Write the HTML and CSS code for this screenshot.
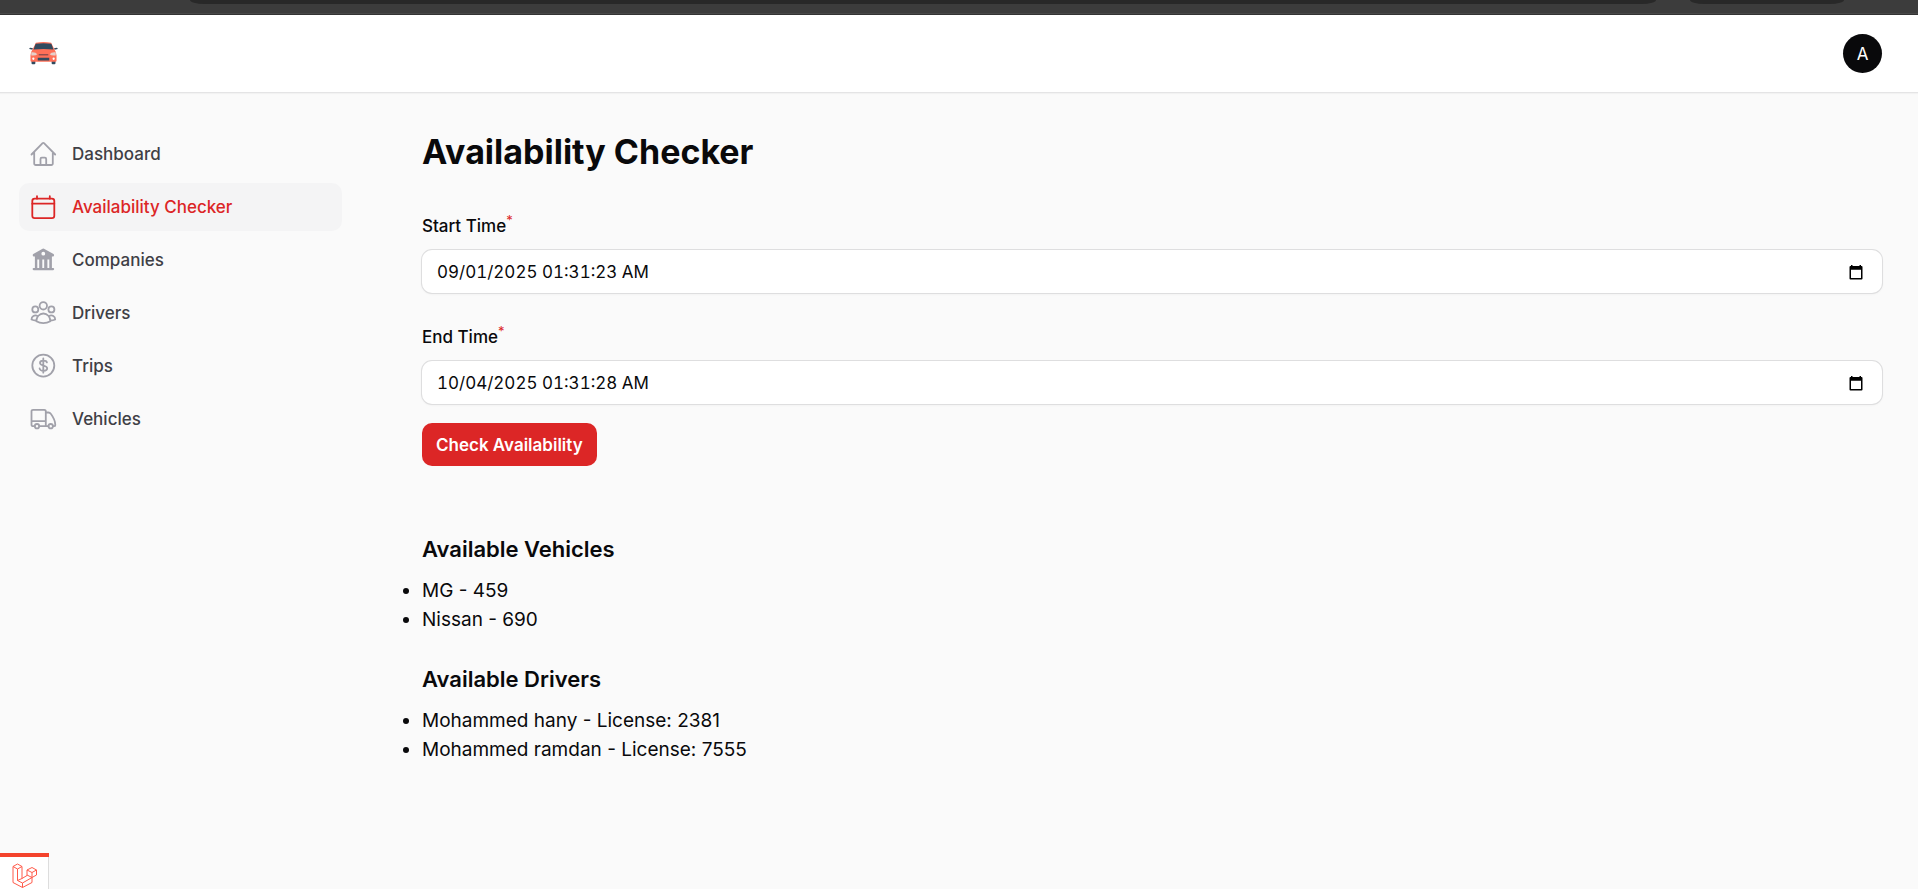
FILE: index.html
```html
<!DOCTYPE html>
<html lang="en-US">
<head>
<meta charset="utf-8">
<title>Availability Checker</title>
<link rel="stylesheet" href="styles.css">
</head>
<body>
<div class="chrome" aria-hidden="true"><span class="chrome-address"></span><span class="chrome-pill"></span></div>
<header class="topbar">
  <a class="brand" href="#" aria-label="Home">
    <svg class="brand-logo" viewBox="0 0 30 24">
      <path fill="#324a5e" d="M2.500 17h4v5.200a1 1 0 0 1-1 1h-2a1 1 0 0 1-1-1zM23.500 17h4v5.200a1 1 0 0 1-1 1h-2a1 1 0 0 1-1-1zM.2 7.400Q0 6 1.500 6L4 6.500 3.500 8zM29.800 7.400Q30 6 28.500 6L26 6.500 26.500 8z"/>
      <path fill="#ff7058" d="M7 .7Q15-.5 23 .7L26.300 7.500Q28.600 10.500 28.600 14v5.500a1.200 1.200 0 0 1-1.200 1.200H2.600a1.200 1.200 0 0 1-1.200-1.200V14Q1.400 10.500 3.700 7.500z"/>
      <path fill="#324a5e" d="M6.800 1.900Q15 .7 23.200 1.900l2.200 6Q15 6.800 4.600 7.900zM9 16.400h12v3H9z"/>
      <path fill="#e6d0cb" d="M2.200 10.800Q7 10.300 8.500 12.800 7 14.500 2.300 14zM27.800 10.800Q23 10.300 21.500 12.800 23 14.500 27.700 14z"/>
      <path fill="#8a4a4c" d="M10 12.600h10v1.400H10z"/>
      <circle cx="4.400" cy="17.500" r="1.200" fill="#fff"/><circle cx="25.600" cy="17.500" r="1.200" fill="#fff"/>
    </svg>
  </a>
  <button class="avatar" type="button" aria-label="User menu">A</button>
</header>
<div class="layout">
  <nav class="sidebar">
    <a class="nav-item" href="#"><svg class="icon" viewBox="0 0 28 28"><path d="M2.500 14.500 13.600 3.200a1 1 0 0 1 1.400 0L26.200 14.500M5.200 12v11.500a1.500 1.500 0 0 0 1.500 1.500h15.600a1.500 1.500 0 0 0 1.500-1.500V12M11.500 25v-6a1.300 1.300 0 0 1 1.300-1.300h3.100a1.300 1.300 0 0 1 1.300 1.300v6"/></svg>Dashboard</a>
    <a class="nav-item active" href="#"><svg class="icon" viewBox="0 0 28 28"><rect x="3.300" y="5.700" width="22" height="19.500" rx="2.400"/><path d="M3.300 10.700h22M8 3.200v2.500M20.800 3.200v2.500"/></svg>Availability Checker</a>
    <a class="nav-item" href="#"><svg class="icon solid" viewBox="0 0 28 28"><path fill-rule="evenodd" d="M13.600 2.800a1.300 1.300 0 0 1 1.400 0l9.500 5.300c1 .6.600 2.300-.6 2.300h-1V22h1.200a1.100 1.100 0 0 1 0 2.200H4.700a1.100 1.100 0 0 1 0-2.200h1.200V10.400h-1c-1.200 0-1.600-1.700-.6-2.300zM14.300 5.800a1.900 1.900 0 1 0 0 3.800 1.900 1.900 0 0 0 0-3.800zM8.300 13.500V22h1.900v-8.500zM13.300 13.500V22h1.900v-8.500zM18.400 13.500V22h1.900v-8.500z"/></svg>Companies</a>
    <a class="nav-item" href="#"><svg class="icon" viewBox="0 0 28 28"><circle cx="14.300" cy="6.800" r="3.700"/><circle cx="6.300" cy="10.400" r="3"/><circle cx="22.400" cy="10.400" r="3"/><path d="M7.300 22.200a7.050 7.700 0 0 1 14.100 0Q18 24.100 14.300 24.100T7.300 22.200zM7.200 21.500Q4.500 21.500 2.500 20.500C2.500 17.500 5.500 15.500 8.600 17M21.500 21.500Q24.200 21.500 26.200 20.500C26.200 17.500 23.200 15.500 20.100 17"/></svg>Drivers</a>
    <a class="nav-item" href="#"><svg class="icon" viewBox="0 0 28 28"><circle cx="14.300" cy="13.600" r="11"/><path d="M14.300 6.500v14.200M17.900 10.400C17.300 8.200 11 7.900 11 11c0 3.400 7.200 1.800 7.200 5.300 0 3.400-7.200 3.200-7.600.2"/></svg>Trips</a>
    <a class="nav-item" href="#"><svg class="icon" viewBox="0 0 28 28"><path d="M5.700 21.200H4a1.500 1.500 0 0 1-1.500-1.500V6.300A1.500 1.500 0 0 1 4 4.800h11.300a1.500 1.500 0 0 1 1.500 1.500v14.900M2.500 16.200h14.300M10.300 21.200h9.200M16.800 7.500h2.500a3 3 0 0 1 2.500 1.300c2.500 3.400 4.500 7 4.500 11.100a1.300 1.300 0 0 1-1.300 1.300h-1"/><circle cx="8" cy="21.200" r="2.200"/><circle cx="21.700" cy="21.200" r="2.200"/></svg>Vehicles</a>
  </nav>
  <main class="content">
    <h1 class="title">Availability Checker</h1>
    <form class="form">
      <div class="field">
        <label class="label" for="start">Start Time<sup class="required">*</sup></label>
        <div class="control">
          <input class="input" id="start" type="text" value="09/01/2025 01:31:23 AM">
          <button class="picker" type="button" aria-label="Choose start time"><svg class="picker-icon" viewBox="0 0 14 16"><path fill-rule="evenodd" d="M2 1h1.500v1h7V1H12v1h.5a1 1 0 0 1 1 1v11.500a1 1 0 0 1-1 1h-11a1 1 0 0 1-1-1V3a1 1 0 0 1 1-1H2zM2 5.800V14h10V5.800z"/></svg></button>
        </div>
      </div>
      <div class="field">
        <label class="label" for="end">End Time<sup class="required">*</sup></label>
        <div class="control">
          <input class="input" id="end" type="text" value="10/04/2025 01:31:28 AM">
          <button class="picker" type="button" aria-label="Choose end time"><svg class="picker-icon" viewBox="0 0 14 16"><path fill-rule="evenodd" d="M2 1h1.500v1h7V1H12v1h.5a1 1 0 0 1 1 1v11.500a1 1 0 0 1-1 1h-11a1 1 0 0 1-1-1V3a1 1 0 0 1 1-1H2zM2 5.800V14h10V5.800z"/></svg></button>
        </div>
      </div>
      <button class="submit" type="button">Check Availability</button>
    </form>
    <div class="results">
      <section>
        <h2 class="subtitle">Available Vehicles</h2>
        <ul class="list"><li>MG - 459</li><li>Nissan - 690</li></ul>
      </section>
      <section>
        <h2 class="subtitle">Available Drivers</h2>
        <ul class="list"><li>Mohammed hany - License: 2381</li><li>Mohammed ramdan - License: 7555</li></ul>
      </section>
    </div>
  </main>
</div>
<button class="debugbar" type="button" aria-label="Open debug bar">
  <svg class="debugbar-logo" viewBox="0 0 26 26"><path d="M1 4.500 5.500 2 10 4.500v12l5-3V8l5-2.500L24.500 8v5L20 15.500v5L10.500 25.500 1 20.500zM1 4.500 5.500 7 10 4.500M5.500 7v11.500l5 2.500 9.500-5.500-5-2.500M10.500 21v4.500M15 8l5 2.500L24.500 8M20 10.500v5M5.500 18.500 10 16.500"/></svg>
</button>
</body>
</html>
```
FILE: styles.css
```css
* { box-sizing: border-box; }
body {
  margin: 0;
  min-height: 100vh;
  background: #fafafa;
  color: #09090b;
  font-family: Inter, "Liberation Sans", sans-serif;
  font-size: 19px;
  line-height: 29px;
}
button, input { font-family: inherit; }
.chrome {
  display: flex;
  gap: 34px;
  height: 15px;
  padding: 0 74px 0 190px;
  background: #3c3c3c;
  border-bottom: 1px solid #333;
  box-shadow: inset 0 -1px #484848;
}
.chrome-address, .chrome-pill {
  height: 4px;
  background: #282828;
  border-radius: 0 0 14px 14px / 0 0 4px 4px;
}
.chrome-address { flex: 1; }
.chrome-pill { width: 154px; }
.topbar {
  display: flex;
  align-items: center;
  justify-content: space-between;
  height: 77px;
  padding: 0 36px 0 29px;
  background: #fff;
  box-shadow: 0 1px #e4e4e5, 0 2px 1px #00000008;
}
.brand { display: flex; }
.brand-logo { width: 29px; height: 23px; }
.avatar {
  width: 39px;
  height: 39px;
  padding: 0;
  border: 0;
  border-radius: 50%;
  background: #09090b;
  color: #fff;
  font-size: 17px;
}
.layout { display: flex; }
.sidebar {
  display: flex;
  flex-direction: column;
  gap: 5px;
  flex: 0 0 384px;
  padding: 38px 42px 38px 19px;
}
.nav-item {
  display: flex;
  align-items: center;
  gap: 15px;
  padding: 10px;
  border-radius: 10px;
  color: #3f3f46;
  font-size: 17px;
  font-weight: 500;
  line-height: 28px;
  text-decoration: none;
}
.icon {
  width: 28px;
  height: 28px;
  fill: none;
  stroke: #a1a1aa;
  stroke-width: 1.8;
  stroke-linecap: round;
  stroke-linejoin: round;
}
.solid { fill: #a1a1aa; stroke: none; }
.active { background: #f4f4f5; color: #dc2626; }
.active .icon { stroke: #dc2626; }
.content {
  flex: 1;
  min-width: 0;
  padding: 38px 36px 38px 38px;
}
.title {
  margin: 0 0 38px;
  font-size: 34px;
  font-weight: 700;
  line-height: 44px;
}
.form { display: flex; flex-direction: column; align-items: flex-start; }
.field {
  display: flex;
  flex-direction: column;
  gap: 9px;
  width: 100%;
  margin-bottom: 30px;
}
.field:nth-child(2) { margin-bottom: 19px; }
.label { font-size: 17px; font-weight: 500; line-height: 29px; }
.required {
  color: #dc2626;
  font-size: 13px;
  font-weight: 400;
  line-height: 0;
}
.control {
  display: flex;
  align-items: center;
  height: 43px;
  padding: 0 19px 0 15px;
  border-radius: 10px;
  background: #fff;
  box-shadow: 0 0 0 1px #dededf, 0 1px 3px #00000010;
}
.input {
  flex: 1;
  min-width: 0;
  height: 100%;
  padding: 0;
  border: 0;
  outline: 0;
  background: transparent;
  color: #09090b;
  font-size: 17px;
  font-variant-numeric: tabular-nums;
}
.picker {
  display: flex;
  padding: 0;
  border: 0;
  background: none;
}
.picker-icon { width: 14px; height: 16px; }
.submit {
  height: 43px;
  padding: 0 14px;
  border: 0;
  border-radius: 10px;
  background: #dc2626;
  color: #fff;
  font-size: 17px;
  font-weight: 600;
}
.results {
  display: flex;
  flex-direction: column;
  gap: 28px;
  margin-top: 66px;
}
.subtitle {
  margin: 0 0 10px;
  font-size: 22px;
  font-weight: 600;
  line-height: 34px;
}
.list { margin: 0; padding: 0; }
.debugbar {
  position: fixed;
  bottom: 0;
  left: 0;
  width: 49px;
  height: 36px;
  padding: 5px 0 0 12px;
  border: 0;
  border-top: 4px solid #f4432c;
  box-shadow: inset -1px 0 #ddd;
  background: #fff;
  display: flex;
  align-items: flex-start;
}
.debugbar-logo {
  flex: none;
  width: 26px;
  height: 26px;
  fill: none;
  stroke: #ff5a4a;
  stroke-width: 1;
  stroke-linejoin: round;
}
```
